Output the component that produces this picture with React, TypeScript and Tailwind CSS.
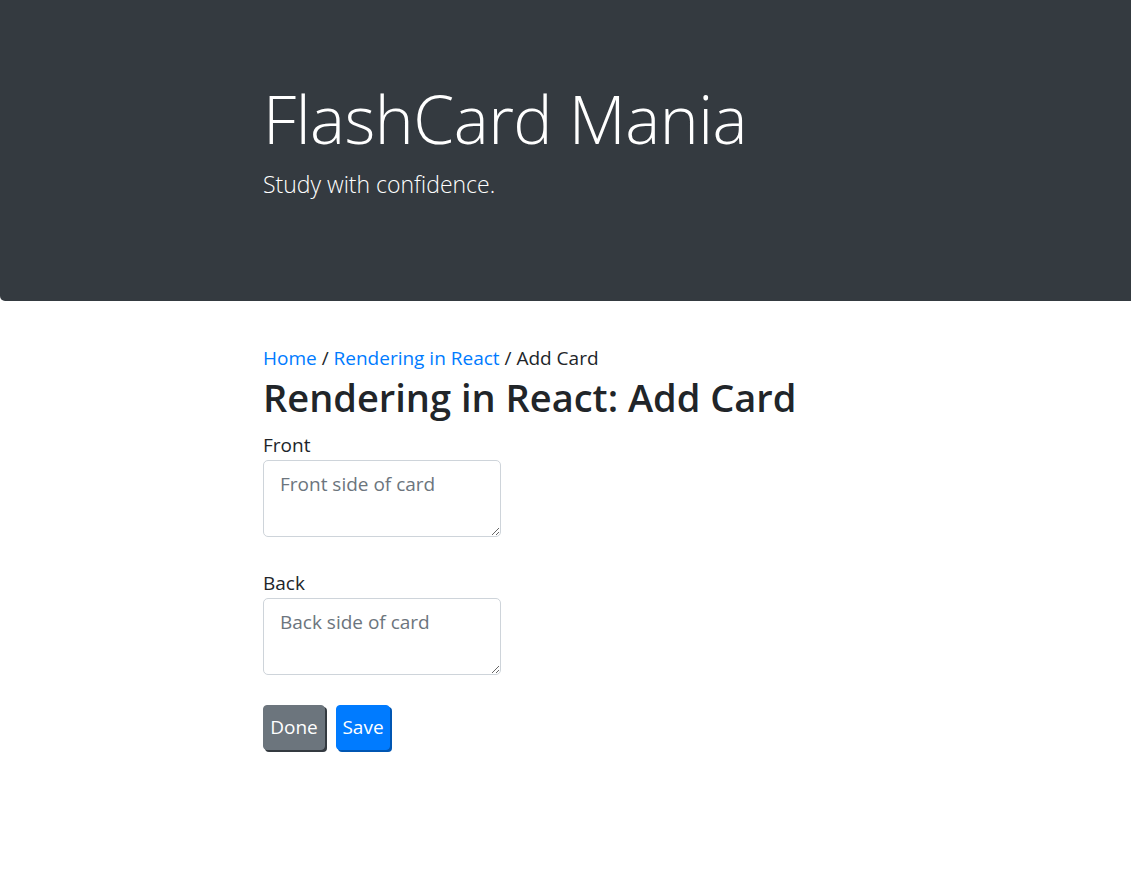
import React from 'react';

const font = { fontFamily: '"Open Sans", "Noto Sans", sans-serif' };

const Field: React.FC<{ label: string; placeholder: string }> = ({ label, placeholder }) => (
  <div className="flex flex-col">
    <label className="text-[19px] leading-[29px] text-[#212529]">{label}</label>
    <textarea
      placeholder={placeholder}
      className="w-[238px] h-[77px] rounded-[5px] border border-[#ced4da] px-[16px] py-[8px] text-[19px] leading-[30px] text-[#495057] placeholder:text-[#6c757d] outline-none"
    />
  </div>
);

export default function App() {
  return (
    <div className="min-h-[879px] bg-white" style={font}>
      <header className="h-[301px] bg-[#343a40] rounded-bl-[5px] pl-[263px] pt-[78px]">
        <h1 className="text-[66px] leading-[80px] font-light text-white tracking-[-0.5px]">FlashCard Mania</h1>
        <p className="mt-[9px] text-[23px] leading-[34px] font-light text-white">Study with confidence.</p>
      </header>

      <main className="pl-[263px] pt-[44px]">
        <nav className="text-[19px] leading-[26px] text-[#212529]">
          <a href="#" className="text-[#007bff]">Home</a> / <a href="#" className="text-[#007bff]">Rendering in React</a> / Add Card
        </nav>
        <h2 className="mt-[2px] text-[38px] leading-[48px] font-semibold text-[#212529]">Rendering in React: Add Card</h2>

        <form className="mt-[10px] flex flex-col gap-[32px]" onSubmit={(e) => e.preventDefault()}>
          <Field label="Front" placeholder="Front side of card" />
          <Field label="Back" placeholder="Back side of card" />
        </form>

        <div className="mt-[30px] flex gap-[11px]">
          <button className="h-[45px] w-[62px] rounded-[4px] bg-[#6c757d] text-white text-[19px] border border-[#6c757d] shadow-[2px_2px_0_#343a40]">Done</button>
          <button className="h-[45px] w-[54px] rounded-[4px] bg-[#007bff] text-white text-[19px] border border-[#007bff] shadow-[2px_2px_0_#0056b3]">Save</button>
        </div>
      </main>
    </div>
  );
}
